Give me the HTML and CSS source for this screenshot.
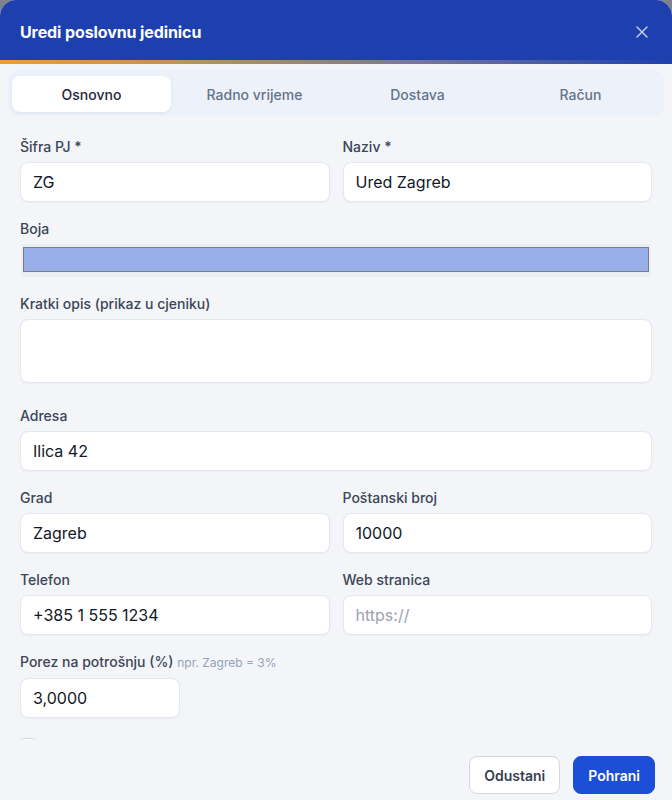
FILE: index.html
```html
<!DOCTYPE html>
<html lang="hr">
<head>
  <meta charset="UTF-8">
  <title>Uredi poslovnu jedinicu</title>
  <link rel="stylesheet" href="styles.css">
</head>
<body>
  <div class="modal">
    <div class="modal-header">
      <h1>Uredi poslovnu jedinicu</h1>
      <button class="close-btn" aria-label="Zatvori">
        <svg width="14" height="14" viewBox="0 0 14 14"><path d="M2 2L12 12M12 2L2 12" stroke="currentColor" stroke-width="1.5" stroke-linecap="round"/></svg>
      </button>
    </div>
    <div class="accent-line"></div>

    <div class="tabs">
      <button class="tab active">Osnovno</button>
      <button class="tab">Radno vrijeme</button>
      <button class="tab">Dostava</button>
      <button class="tab">Račun</button>
    </div>

    <div class="modal-body">
      <div class="row">
        <div class="field">
          <label>Šifra PJ *</label>
          <input class="input" type="text" value="ZG">
        </div>
        <div class="field">
          <label>Naziv *</label>
          <input class="input" type="text" value="Ured Zagreb">
        </div>
      </div>

      <div class="field">
        <label>Boja</label>
        <div class="color-input"><div class="color-swatch"></div></div>
      </div>

      <div class="field">
        <label>Kratki opis (prikaz u cjeniku)</label>
        <textarea class="input textarea"></textarea>
      </div>

      <div class="field">
        <label>Adresa</label>
        <input class="input" type="text" value="Ilica 42">
      </div>

      <div class="row">
        <div class="field">
          <label>Grad</label>
          <input class="input" type="text" value="Zagreb">
        </div>
        <div class="field">
          <label>Poštanski broj</label>
          <input class="input" type="text" value="10000">
        </div>
      </div>

      <div class="row">
        <div class="field">
          <label>Telefon</label>
          <input class="input" type="text" value="+385 1 555 1234">
        </div>
        <div class="field">
          <label>Web stranica</label>
          <input class="input" type="text" placeholder="https://">
        </div>
      </div>

      <div class="field">
        <label>Porez na potrošnju (%) <span class="hint">npr. Zagreb = 3%</span></label>
        <input class="input input-small" type="text" value="3,0000">
      </div>

      <div class="check-row">
        <span class="checkbox"></span>
      </div>
    </div>

    <div class="modal-footer">
      <button class="btn btn-secondary">Odustani</button>
      <button class="btn btn-primary">Pohrani</button>
    </div>
  </div>
</body>
</html>
```

FILE: styles.css
```css
* {
  margin: 0;
  padding: 0;
  box-sizing: border-box;
  font-family: Inter, "Noto Sans", "Liberation Sans", sans-serif;
}

html, body {
  height: 100vh;
  overflow: hidden;
}

body {
  background: #7d828c;
}

.modal {
  height: 100vh;
  display: flex;
  flex-direction: column;
  background: #f3f5f9;
  border-radius: 16px 16px 0 0;
  overflow: hidden;
}

.modal-header {
  height: 60px;
  flex-shrink: 0;
  display: flex;
  align-items: center;
  justify-content: space-between;
  padding: 4px 20px 0;
  background: #1e40af;
}

.modal-header h1 {
  font-size: 16px;
  font-weight: 700;
  color: #ffffff;
  letter-spacing: -0.1px;
}

.close-btn {
  width: 24px;
  height: 24px;
  margin-right: -2px;
  border: none;
  background: transparent;
  color: rgba(255, 255, 255, 0.72);
  display: flex;
  align-items: center;
  justify-content: center;
  cursor: pointer;
}

.accent-line {
  height: 4px;
  flex-shrink: 0;
  background: linear-gradient(90deg, #eaa030 0%, #b89060 30%, #76789a 62%, #1e40af 100%);
}

/* Tabovi */
.tabs {
  flex-shrink: 0;
  margin: 6px 8px 0;
  padding: 6px 4px 4px;
  display: grid;
  grid-template-columns: repeat(4, 1fr);
  gap: 4px;
  background: #edf1fa;
  border-radius: 10px;
}

.tab {
  height: 36px;
  border: none;
  border-radius: 8px;
  background: transparent;
  font-size: 14px;
  font-weight: 500;
  color: #64748b;
  cursor: pointer;
}

.tab.active {
  background: #ffffff;
  color: #1f2937;
  box-shadow: 0 1px 3px rgba(15, 23, 42, 0.08);
}

/* Forma */
.modal-body {
  flex: 1;
  overflow: hidden;
  padding: 21px 20px 0;
}

.row {
  display: grid;
  grid-template-columns: 1fr 1fr;
  gap: 13px;
}

.field {
  margin-bottom: 17px;
}

.field label {
  display: block;
  font-size: 14px;
  line-height: 20px;
  font-weight: 500;
  color: #3b4656;
  margin-bottom: 5px;
}

.hint {
  font-size: 12px;
  font-weight: 400;
  color: #94a3b8;
}

.input {
  display: block;
  width: 100%;
  height: 40px;
  padding: 0 12px;
  border: 1px solid #e3e7ee;
  border-radius: 8px;
  background: #ffffff;
  font-size: 16px;
  color: #111827;
  outline: none;
  box-shadow: 0 1px 2px rgba(15, 23, 42, 0.04);
}

.input::placeholder {
  color: #9ca3af;
}

.textarea {
  height: 64px;
  resize: none;
  margin-bottom: 23px;
}

.field:has(.textarea) {
  margin-bottom: 0;
}

.input-small {
  width: 160px;
}

.color-input {
  margin: 0 1px;
  padding: 3px 2px 5px;
  background: #eceef1;
}

.color-swatch {
  height: 25px;
  background: #97aee6;
  border: 1px solid #7a7d85;
}

.check-row {
  padding-top: 3px;
}

.checkbox {
  display: block;
  width: 16px;
  height: 16px;
  border: 1px solid #cfd5de;
  border-radius: 4px;
  background: #ffffff;
}

/* Footer */
.modal-footer {
  flex-shrink: 0;
  display: flex;
  justify-content: flex-end;
  gap: 13px;
  padding: 16px 17px 6px;
}

.btn {
  height: 38px;
  padding: 0 14px;
  border-radius: 8px;
  font-size: 14px;
  font-weight: 600;
  cursor: pointer;
}

.btn-secondary {
  background: #ffffff;
  border: 1px solid #d3d8e0;
  color: #374151;
}

.btn-primary {
  background: #1d4ed8;
  border: 1px solid #1d4ed8;
  color: #ffffff;
}
```
